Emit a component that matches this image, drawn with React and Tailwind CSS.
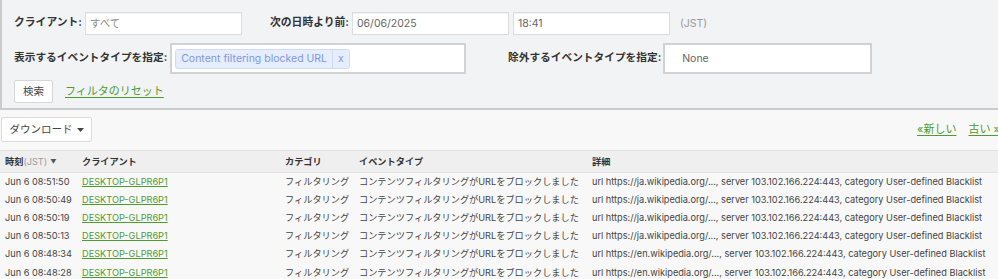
import React from 'react';

const rows = [
  { time: 'Jun 6 08:51:50', host: 'ja' },
  { time: 'Jun 6 08:50:49', host: 'ja' },
  { time: 'Jun 6 08:50:19', host: 'ja' },
  { time: 'Jun 6 08:50:13', host: 'ja' },
  { time: 'Jun 6 08:48:34', host: 'en' },
  { time: 'Jun 6 08:48:28', host: 'en' },
];

function TextBox({ value, muted, className = '' }) {
  return (
    <div
      className={`h-[23px] bg-white border border-[#dcdcdc] shadow-[inset_0_1px_1px_rgba(0,0,0,0.06)] flex items-center px-[4px] text-[10.5px] ${muted ? 'text-[#8a8a8a]' : 'text-[#666]'} ${className}`}
    >
      {value}
    </div>
  );
}

export default function App() {
  return (
    <div className="w-[998px] h-[279px] overflow-hidden bg-[#f8f8f8] font-[Inter,'Noto_Sans_CJK_JP',sans-serif] text-[#333]">
      {/* filter panel */}
      <div className="h-[110px] bg-[#f2f3f5] border-l-2 border-b-2 border-[#cbcbcb] pl-[12px] pt-[12px]">
        <div className="flex items-center h-[23px]">
          <span className="text-[10.8px] font-bold">クライアント:</span>
          <TextBox value="すべて" muted className="ml-[3px] w-[157px]" />
          <span className="w-[107px] text-right text-[10.8px] font-bold">次の日時より前:</span>
          <TextBox value="06/06/2025" className="ml-[3px] w-[157px]" />
          <TextBox value="18:41" className="ml-[4px] w-[157px]" />
          <span className="ml-[10px] text-[10.5px] text-[#999]">(JST)</span>
        </div>

        <div className="flex items-center mt-[8px] h-[31px]">
          <span className="text-[10.7px] font-bold">表示するイベントタイプを指定:</span>
          <div className="ml-[3px] w-[296px] h-[31px] bg-white border-2 border-[#d2d2d2] flex items-center pl-[3px]">
            <div className="h-[20px] flex items-stretch rounded-[3px] bg-[#e6edfd] border border-[#cfdcf7] text-[10.5px] text-[#7f97e4]">
              <span className="px-[5px] flex items-center">Content filtering blocked URL</span>
              <span className="border-l border-[#cfdcf7] px-[5px] flex items-center">x</span>
            </div>
          </div>
          <span className="w-[195px] text-right text-[10.7px] font-bold">除外するイベントタイプを指定:</span>
          <div className="ml-[2px] w-[209px] h-[31px] bg-white border-2 border-[#d2d2d2] flex items-center pl-[17px] text-[10.5px] text-[#666]">
            None
          </div>
        </div>

        <div className="flex items-center mt-[6px]">
          <button className="w-[39px] h-[23px] bg-white border border-[#d6d6d6] rounded-[2px] text-[10.5px] text-[#444]">
            検索
          </button>
          <a className="ml-[12px] text-[11px] text-[#4e9b33] underline underline-offset-2">フィルタのリセット</a>
        </div>
      </div>

      {/* toolbar */}
      <div className="flex items-center justify-between mt-[7px] h-[25px] pl-[1px]">
        <button className="w-[91px] h-[25px] bg-white border border-[#dcdcdc] rounded-[2px] text-[10.5px] text-[#444] flex items-center justify-center gap-[4px]">
          ダウンロード
          <svg width="7" height="4" viewBox="0 0 7 4"><path d="M0 0h7L3.5 4z" fill="#444" /></svg>
        </button>
        <div className="flex items-center gap-[12px] text-[11px] text-[#4e9b33] mr-[-2px]">
          <a className="underline underline-offset-2">«新しい</a>
          <a className="underline underline-offset-2">古い »</a>
        </div>
      </div>

      {/* log table */}
      <table className="mt-[8px] w-full table-fixed border-collapse text-[9.2px] text-[#444]">
        <colgroup>
          <col className="w-[77px]" />
          <col className="w-[203px]" />
          <col className="w-[74px]" />
          <col className="w-[233px]" />
          <col />
        </colgroup>
        <thead>
          <tr className="h-[22px] bg-[#efefef] border-t border-b border-[#e2e2e2] text-left">
            <th className="pl-[5px] font-bold text-[#333] whitespace-nowrap">
              時刻<span className="font-normal text-[#999]">(JST)</span>
              <span className="ml-[3px] text-[6px] text-[#555] align-[1px]">▼</span>
            </th>
            <th className="pl-[5px] font-bold text-[#333]">クライアント</th>
            <th className="pl-[5px] font-bold text-[#333]">カテゴリ</th>
            <th className="pl-[5px] font-bold text-[#333]">イベントタイプ</th>
            <th className="pl-[5px] font-bold text-[#333]">詳細</th>
          </tr>
        </thead>
        <tbody>
          {rows.map((r) => (
            <tr key={r.time} className="h-[18.2px]">
              <td className="pl-[5px] whitespace-nowrap">{r.time}</td>
              <td className="pl-[5px]">
                <a className="text-[#4e9b33] underline underline-offset-1">DESKTOP-GLPR6P1</a>
              </td>
              <td className="pl-[5px] whitespace-nowrap">フィルタリング</td>
              <td className="pl-[5px] whitespace-nowrap">コンテンツフィルタリングがURLをブロックしました</td>
              <td className="pl-[5px] whitespace-nowrap">
                url https://{r.host}.wikipedia.org/..., server 103.102.166.224:443, category User-defined Blacklist
              </td>
            </tr>
          ))}
        </tbody>
      </table>
    </div>
  );
}
